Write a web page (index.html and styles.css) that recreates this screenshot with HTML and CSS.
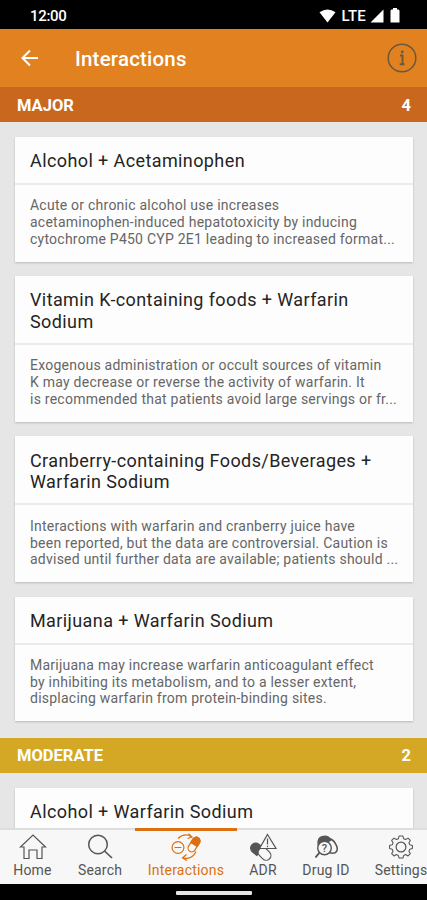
FILE: index.html
```html
<!DOCTYPE html>
<html lang="en">
<head>
<meta charset="UTF-8" />
<meta name="viewport" content="width=device-width, initial-scale=1" />
<title>Interactions</title>
<link rel="stylesheet" href="styles.css">
</head>
<body>
<div class="statusbar">
  <span class="clock">12:00</span>
  <div class="indicators">
    <svg class="wifi" width="17" height="14" viewBox="0 0 17 14"><path d="M.5 3.2Q8.500-2.400 16.500 3.200L8.500 13.500Z" fill="#fff"/></svg>
    <span class="network">LTE</span>
    <svg class="signal" width="14" height="14" viewBox="0 0 14 14"><path d="M13.500.5V13.500H.5Z" fill="#fff"/></svg>
    <svg class="battery" width="10" height="15" viewBox="0 0 10 15"><path d="M3 0H7V1.500H8.500L9.500 2.500V14.500H.5V2.500L1.500 1.500H3Z" fill="#fff"/></svg>
  </div>
</div>

<header class="appbar">
  <svg class="back" width="18" height="18" viewBox="0 0 18 18"><path d="M17 9H2M9 1.500L1.500 9L9 16.500" fill="none" stroke="#fff" stroke-width="2"/></svg>
  <h1>Interactions</h1>
  <svg class="info" width="30" height="30" viewBox="0 0 30 30" fill="none" stroke="#69583d">
    <circle cx="15" cy="15" r="13.800" stroke-width="1.500"/>
    <path d="M13 12.500H15.500V21M12.700 21.300H17.500" stroke-width="1.900"/>
    <circle cx="15.200" cy="9" r="1.400" fill="#69583d" stroke="none"/>
  </svg>
</header>

<main class="content">
  <div class="section major"><span>MAJOR</span><span>4</span></div>
  <div class="cards">
    <article class="card">
      <h2>Alcohol + Acetaminophen</h2>
      <p>Acute or chronic alcohol use increases<br>acetaminophen-induced hepatotoxicity by inducing<br>cytochrome P450 CYP 2E1 leading to increased format...</p>
    </article>
    <article class="card">
      <h2>Vitamin K-containing foods + Warfarin<br>Sodium</h2>
      <p>Exogenous administration or occult sources of vitamin<br>K may decrease or reverse the activity of warfarin. It<br>is recommended that patients avoid large servings or fr...</p>
    </article>
    <article class="card">
      <h2>Cranberry-containing Foods/Beverages +<br>Warfarin Sodium</h2>
      <p>Interactions with warfarin and cranberry juice have<br>been reported, but the data are controversial. Caution is<br>advised until further data are available; patients should ...</p>
    </article>
    <article class="card">
      <h2>Marijuana + Warfarin Sodium</h2>
      <p>Marijuana may increase warfarin anticoagulant effect<br>by inhibiting its metabolism, and to a lesser extent,<br>displacing warfarin from protein-binding sites.</p>
    </article>
  </div>
  <div class="section moderate"><span>MODERATE</span><span>2</span></div>
  <div class="cards">
    <article class="card">
      <h2>Alcohol + Warfarin Sodium</h2>
    </article>
  </div>
</main>

<nav class="tabs">
  <a class="tab">
    <svg width="30" height="28" viewBox="0 0 30 28"><path d="M2.500 14L15 2L27.500 14H24V25.500H19V17H11V25.500H6V14Z"/></svg>
    <span>Home</span>
  </a>
  <a class="tab">
    <svg width="30" height="28" viewBox="0 0 30 28"><circle cx="13" cy="11.500" r="9.300" stroke-width="1.500"/><path d="M19.500 18L27 25" stroke-width="1.700"/></svg>
    <span>Search</span>
  </a>
  <a class="tab active">
    <svg width="32" height="28" viewBox="0 0 32 28">
      <circle cx="8" cy="14.500" r="5.900"/>
      <path d="M4.500 14.500H11.500M8 5.500Q14.500-.5 21 3.500M18.500.8L22 4L17.500 5.500M26 18.500Q22 27 13.500 25M16.500 21.500L12.500 25L17 27.500"/>
      <g transform="rotate(32 24 11.500)"><rect x="20.300" y="3.500" width="7.400" height="16" rx="3.700"/><path class="solid" d="M20.300 11.500V7.200A3.700 3.700 0 0 1 27.700 7.200V11.500Z"/></g>
    </svg>
    <span>Interactions</span>
  </a>
  <a class="tab">
    <svg width="30" height="28" viewBox="0 0 30 28">
      <g transform="rotate(-52 12 18.500)"><path class="solid" d="M7 18.500V13A5 5 0 0 1 17 13V18.500Z"/></g>
      <g transform="rotate(-45 16 20)"><rect class="paper" x="11" y="14" width="9.500" height="14" rx="4.700"/></g>
      <path class="paper" d="M19.500 1.500L28 15.500H11.500Z"/><path d="M19.500 5.500V11.500M19.500 12.700V14.200"/>
    </svg>
    <span>ADR</span>
  </a>
  <a class="tab">
    <svg width="30" height="28" viewBox="0 0 30 28">
      <path class="solid" d="M7 12Q6 3 13.500 3Q18 3 20 7L12 12Z"/>
      <path d="M17 6C23 5 28 15 25.500 18.500C23 22 17 19 17 19" stroke-width="1.600"/>
      <circle class="paper" cx="13.500" cy="15" r="6.800" stroke-width="1.400"/>
      <path d="M8.500 19.500L4.500 24.500" stroke-width="2"/>
      <text x="13.500" y="19" text-anchor="middle">?</text>
    </svg>
    <span>Drug ID</span>
  </a>
  <a class="tab">
    <!-- gear: eight rounded teeth around a hub -->
    <svg width="30" height="28" viewBox="0 0 30 28">
      <path d="M12.800 3H17.200L18 6L20.300 7L23 5.400L25.600 8L24 10.700L25 13L28 13.800V17.200L25 18L24 20.300L25.600 23L23 25.600L20.300 24L18 25L17.200 28H12.800L12 25L9.700 24L7 25.600L4.400 23L6 20.300L5 18L2 17.200V13.800L5 13L6 10.700L4.400 8L7 5.400L9.700 7L12 6Z" stroke-linejoin="round" transform="translate(1.800 .4) scale(.88)"/>
      <circle cx="15" cy="14" r="4.900"/>
    </svg>
    <span>Settings</span>
  </a>
</nav>
<div class="sysnav"><div class="handle"></div></div>
</body>
</html>
```
FILE: styles.css
```css
* {
  box-sizing: border-box;
}
body {
  margin: 0;
  width: 427px;
  height: 900px;
  display: flex;
  flex-direction: column;
  overflow: hidden;
  background: #e6e6e6;
  font-family: Roboto, sans-serif;
}
h1, h2, p {
  margin: 0;
}
.statusbar {
  flex: none;
  height: 29px;
  padding: 2px 27px 0 30px;
  display: flex;
  align-items: center;
  justify-content: space-between;
  background: #000;
  color: #fff;
}
.clock {
  font-size: 15px;
  font-weight: 500;
  letter-spacing: -0.3px;
}
.indicators {
  display: flex;
  align-items: center;
}
.network {
  margin: 0 4px 0 6px;
  font-size: 15px;
  font-weight: 500;
  letter-spacing: 0.2px;
}
.battery {
  margin-left: 6px;
}
.appbar {
  flex: none;
  height: 58px;
  padding: 0 10px 0 21px;
  display: flex;
  align-items: center;
  background: #e2811f;
  color: #fff;
}
.appbar h1 {
  flex: 1;
  margin-left: 36px;
  padding-top: 2px;
  font-size: 20.500px;
  font-weight: 500;
  letter-spacing: 0.2px;
}
.content {
  flex: 1;
  min-height: 0;
  overflow: hidden;
}
.section {
  height: 35px;
  padding: 1px 16px 0 17px;
  display: flex;
  align-items: center;
  justify-content: space-between;
  color: #fff;
  font-size: 16.500px;
  font-weight: 700;
}
.major {
  background: #ca671f;
}
.moderate {
  background: #d4a825;
}
.cards {
  padding: 15px 14px 16.500px 15px;
  display: flex;
  flex-direction: column;
  gap: 14.400px;
}
.card {
  background: #fdfdfd;
  box-shadow: 0 1px 2px rgba(0, 0, 0, 0.2);
}
.card h2 {
  padding: 13.200px 15px 11.300px;
  border-bottom: 2px solid #ebebeb;
  color: #242424;
  font-size: 18px;
  font-weight: 400;
  line-height: 21.300px;
  letter-spacing: 0.4px;
  white-space: nowrap;
}
.card p {
  padding: 12.300px 15px 14.200px;
  color: #666;
  font-size: 14px;
  line-height: 16.800px;
  letter-spacing: 0.240px;
  white-space: nowrap;
}
.tabs {
  flex: none;
  height: 56px;
  display: grid;
  grid-template-columns: 65px 70px 102px 52px 74px 76px;
  background: #f7f7f7;
  box-shadow: inset 0 2px #dedede;
  overflow: hidden;
}
.tab {
  display: flex;
  flex-direction: column;
  align-items: center;
  padding-top: 5px;
  border-top: 0 solid #dc7010;
  color: #555;
  font-size: 14px;
  line-height: 18px;
  letter-spacing: 0.2px;
  white-space: nowrap;
}
.tab svg {
  flex: none;
  fill: none;
  stroke: currentColor;
  stroke-width: 1.2;
}
.tab .solid {
  fill: currentColor;
}
.tab .paper {
  fill: #f7f7f7;
}
.tab text {
  fill: currentColor;
  stroke: none;
  font-size: 11px;
  font-weight: 500;
}
.active {
  padding-top: 2px;
  border-top-width: 3px;
  color: #dc7010;
}
.sysnav {
  flex: none;
  height: 16px;
  padding-top: 7px;
  background: #000;
}
.handle {
  width: 76px;
  height: 4px;
  margin: 0 auto;
  border-radius: 1px;
  background: #e4e4e4;
}
```
